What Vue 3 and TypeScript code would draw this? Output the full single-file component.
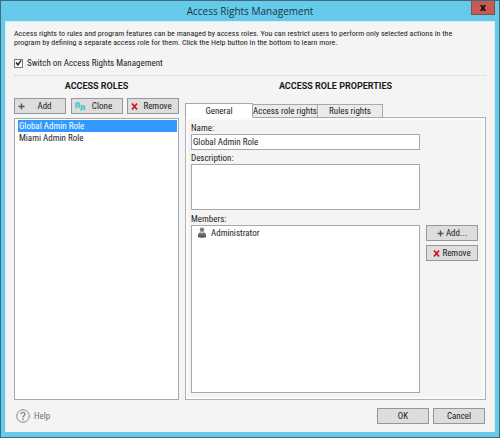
<script setup lang="ts">
import { ref } from 'vue'

const enabled = ref<boolean>(true)
const roles = ref<string[]>(['Global Admin Role', 'Miami Admin Role'])
const selectedRole = ref<string>('Global Admin Role')
const roleName = ref<string>('Global Admin Role')
const description = ref<string>('')
const tabs: string[] = ['General', 'Access role rights', 'Rules rights']
const activeTab = ref<string>('General')
const members = ref<string[]>(['Administrator'])
</script>

<template>
  <div class="window">
    <header class="titlebar">
      <h1>Access Rights Management</h1>
      <button class="close" type="button" aria-label="Close">
        <svg width="8" height="8" viewBox="0 0 8 8">
          <path d="M1 1h2l1 1.600L5 1h2L5.200 4 7 7H5L4 5.400 3 7H1l1.800-3z" fill="#1b0f0e" />
        </svg>
      </button>
    </header>

    <main class="body">
      <p class="intro">
        Access rights to rules and program features can be managed by access roles. You can restrict users to perform only selected actions in the<br />
        program by defining a separate access role for them. Click the Help button in the bottom to learn more.
      </p>
      <label class="switch">
        <input v-model="enabled" type="checkbox" />
        <span>Switch on Access Rights Management</span>
      </label>
      <hr class="rule" />

      <div class="columns">
        <section class="roles">
          <h2>ACCESS ROLES</h2>
          <div class="toolbar">
            <button class="btn" type="button">
              <svg class="icon" width="9" height="9" viewBox="0 0 9 9"><path d="M3.500 1.500v6M.5 4.500h6" stroke="#46596a" stroke-width="1.400" /></svg>
              <span class="caption">Add</span>
            </button>
            <button class="btn" type="button">
              <svg class="icon" width="11" height="9" viewBox="0 0 11 9" fill="none" stroke="#45c3bd" stroke-width="1.300">
                <path d="M1.200 5.800V1h2.200c1.700 0 1.700 2.400 0 2.400H1.200M3.200 3.400l1.500 2.400M0.300 5.600h1.800" />
                <path d="M6.400 8.200V3.600h2.200c1.700 0 1.700 2.300 0 2.300H6.400M8.300 5.900l1.700 2.300M5.500 8h1.800" />
              </svg>
              <span class="caption">Clone</span>
            </button>
            <button class="btn" type="button">
              <svg class="icon" width="9" height="9" viewBox="0 0 9 9"><path d="M1 1.500l5 6M6 1.500l-5 6" stroke="#cf1420" stroke-width="1.700" /></svg>
              <span class="caption">Remove</span>
            </button>
          </div>
          <ul class="list">
            <li v-for="role in roles" :key="role">
              <button
                type="button"
                class="role"
                :class="{ selected: role === selectedRole }"
                @click="selectedRole = role"
              >{{ role }}</button>
            </li>
          </ul>
        </section>

        <section class="properties">
          <h2>ACCESS ROLE PROPERTIES</h2>
          <div class="tabs" role="tablist">
            <button
              v-for="tab in tabs"
              :key="tab"
              type="button"
              role="tab"
              class="tab"
              :class="{ active: tab === activeTab }"
              :aria-selected="tab === activeTab"
              @click="activeTab = tab"
            >{{ tab }}</button>
          </div>
          <div class="panel" role="tabpanel">
            <label class="field-label" for="role-name">Name:</label>
            <input id="role-name" v-model="roleName" class="box name" type="text" />
            <label class="field-label" for="role-description">Description:</label>
            <textarea id="role-description" v-model="description" class="box description"></textarea>
            <span id="members-label" class="field-label">Members:</span>
            <ul class="box members" aria-labelledby="members-label">
              <li v-for="member in members" :key="member" class="member">
                <svg width="10" height="11" viewBox="0 0 10 11">
                  <defs>
                    <linearGradient id="person" x1="0" y1="0" x2="0" y2="1">
                      <stop offset="0" stop-color="#8c8c8c" />
                      <stop offset="1" stop-color="#444444" />
                    </linearGradient>
                  </defs>
                  <circle cx="5" cy="2.800" r="2.300" fill="#808080" />
                  <path d="M1 10.300V8C1 6.300 2.300 5.300 3.700 5.300L5 6l1.300-.7C7.700 5.300 9 6.300 9 8v2.300q-4 .8-8 0z" fill="url(#person)" />
                </svg>
                <span>{{ member }}</span>
              </li>
            </ul>
            <div class="member-actions">
              <button class="btn compact" type="button">
                <svg width="7" height="9" viewBox="0 0 7 9"><path d="M3.500 1.500v6M.5 4.500h6" stroke="#46596a" stroke-width="1.400" /></svg>
                <span>Add...</span>
              </button>
              <button class="btn compact" type="button">
                <svg width="7" height="9" viewBox="0 0 7 9"><path d="M1 1.500l5 6M6 1.500l-5 6" stroke="#cf1420" stroke-width="1.700" /></svg>
                <span>Remove</span>
              </button>
            </div>
          </div>
        </section>
      </div>

      <footer class="footer">
        <a class="help" href="#help">
          <svg width="14" height="14" viewBox="0 0 14 14" fill="none" stroke="#7e8a92">
            <circle cx="7" cy="7" r="6.300" stroke-width="1" />
            <path d="M5 5.300C5 2.700 9 2.800 9 5.100 9 6.600 7 6.700 7 8.400" stroke-width="1.400" />
            <path d="M7 9.500v1.500" stroke-width="1.500" />
          </svg>
          <span>Help</span>
        </a>
        <button class="btn dialog" type="button">OK</button>
        <button class="btn dialog" type="button">Cancel</button>
      </footer>
    </main>
  </div>
</template>

<style>
body {
  margin: 0;
}
</style>

<style scoped>
* {
  box-sizing: border-box;
}

.window {
  display: flex;
  flex-direction: column;
  min-height: 100vh;
  padding: 0 4px 5px;
  border: 1px solid #3f6b7b;
  background: #66caea;
  color: #1c1c1c;
  font: 9px/10px "Roboto Condensed", "Arial Narrow", Roboto, sans-serif;
}

button,
input,
textarea {
  margin: 0;
  color: inherit;
  font: inherit;
}

.titlebar {
  display: grid;
  grid-template-columns: 24px 1fr 24px;
  align-items: start;
  height: 20px;
}

h1 {
  grid-column: 2;
  margin: 0;
  color: #173642;
  font: 10px/20px "Open Sans", "Noto Sans", sans-serif;
  text-align: center;
}

.close {
  display: flex;
  align-items: center;
  justify-content: center;
  width: 24px;
  height: 14px;
  padding: 0;
  border: 1px solid #8b4a4a;
  border-top: 0;
  background: #c75b54;
}

.body {
  display: flex;
  flex: 1;
  flex-direction: column;
  padding: 7px 8px 8px;
  border: 1px solid #dceef4;
  border-bottom: 0;
  background: #f4f4f4;
}

.intro {
  margin: 0;
  font-size: 8px;
  line-height: 9px;
}

.switch {
  display: flex;
  align-items: center;
  gap: 4px;
  height: 10px;
  margin-top: 11px;
}

.switch input {
  display: grid;
  place-items: center;
  width: 9px;
  height: 9px;
  border: 1px solid #777777;
  background: #ffffff;
  appearance: none;
}

.switch input:checked::before {
  width: 7px;
  height: 7px;
  background: #222222;
  clip-path: polygon(6% 45%, 24% 36%, 42% 58%, 80% 8%, 96% 18%, 46% 90%, 36% 90%);
  content: "";
}

.rule {
  width: 100%;
  margin: 7px 0 0;
  border: 0;
  border-top: 1px dotted #d2d2d2;
}

.columns {
  display: grid;
  flex: 1;
  grid-template-columns: 165px 1fr;
  gap: 6px;
}

.roles,
.properties {
  display: flex;
  flex-direction: column;
  min-width: 0;
}

h2 {
  margin: 5px 0 0;
  font: bold 9px/10px Roboto, sans-serif;
  text-align: center;
}

.toolbar {
  display: flex;
  justify-content: space-between;
  margin-top: 7px;
}

.btn {
  display: flex;
  align-items: center;
  width: 52px;
  height: 16px;
  padding: 0 3px;
  border: 1px solid #94989c;
  background: #dddddd;
  line-height: 12px;
}

.icon {
  flex: none;
}

.caption {
  flex: 1;
  text-align: center;
}

.list,
.members {
  margin: 0;
  list-style: none;
  background: #ffffff;
}

.list {
  flex: 1;
  margin-top: 4px;
  padding: 1px 1px 1px 3px;
  border: 1px solid #a5a8ae;
}

.role {
  display: block;
  width: 100%;
  height: 12px;
  padding: 0 1px;
  border: 0;
  background: transparent;
  line-height: 12px;
  text-align: left;
}

.role.selected {
  background: #3399ff;
  color: #ffffff;
}

.tabs {
  z-index: 1;
  display: flex;
  align-items: flex-end;
  height: 15px;
  margin-top: 12px;
}

.tab {
  flex: none;
  width: 65px;
  height: 14px;
  padding: 0;
  border: 1px solid #a5a8ae;
  border-left-width: 0;
  background: #ebebeb;
  line-height: 12px;
  white-space: nowrap;
}

.tab.active {
  width: 68px;
  height: 15px;
  border-bottom-color: #ffffff;
  border-left-width: 1px;
  background: #ffffff;
}

.panel {
  display: grid;
  flex: 1;
  grid-template-columns: 1fr 52px;
  grid-template-rows: 11px 16px 14px 46px 15px 1fr;
  column-gap: 6px;
  margin-top: -1px;
  padding: 5px 7px 6px 5px;
  border: 1px solid #b0b2b6;
  background: #f4f4f4;
  box-shadow: inset 0 0 0 2px #fbfbfb;
}

.field-label {
  grid-column: 1;
  align-self: end;
  padding-bottom: 1px;
}

.box {
  grid-column: 1;
  width: 100%;
  border: 1px solid #a5a8ae;
  border-radius: 0;
  background: #ffffff;
}

.name {
  padding: 0 1px;
}

.description {
  padding: 1px;
  resize: none;
}

.members {
  padding: 1px 5px;
}

.member {
  display: flex;
  align-items: center;
  gap: 4px;
  height: 11px;
}

.member-actions {
  display: flex;
  grid-row: 6;
  grid-column: 2;
  flex-direction: column;
  gap: 4px;
}

.compact {
  justify-content: center;
  gap: 2px;
}

.footer {
  display: flex;
  align-items: center;
  gap: 4px;
  padding: 8px 1px 0 2px;
}

.help {
  display: flex;
  align-items: center;
  gap: 4px;
  margin-right: auto;
  color: #68747c;
  text-decoration: none;
}

.dialog {
  justify-content: center;
}
</style>
